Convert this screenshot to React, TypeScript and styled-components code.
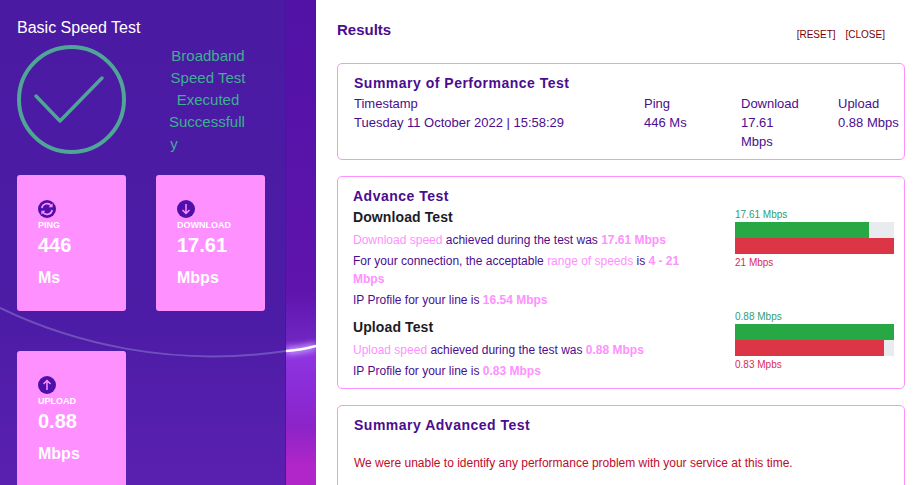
import React from 'react';
import styled, { createGlobalStyle } from 'styled-components';

const Global = createGlobalStyle`
    html, body {
        margin: 0;
        padding: 0;
        height: 485px;
        overflow: hidden;
        background: #fff;
    }
    * {
        box-sizing: border-box;
    }
    body {
        font-family: "Liberation Sans", Arial, sans-serif;
    }
`

const Page = styled.div`
    display: flex;
    width: 919px;
    height: 485px;
    overflow: hidden;
`

const Side = styled.aside`
    position: relative;
    flex: 0 0 316px;
    height: 485px;
    overflow: hidden;
    background: linear-gradient(180deg, #5212a6 0%, #5e14ad 60%, #6f25c0 70%, #9036e0 72.5%, #8a2cd8 80%, #8c24c8 88%, #b026c8 96%);
`

const Wave = styled.svg`
    position: absolute;
    left: 0;
    top: 0;
`

const Panel = styled.div`
    position: relative;
    width: 286px;
    height: 485px;
    padding: 18px 0 0 17px;
    background: linear-gradient(180deg, #4a1aa3 0%, #4c1ca6 65%, #5a20b0 100%);
    border-right: 1px solid #4c139c;
`

const SideTitle = styled.h1`
    position: relative;
    margin: 0;
    font-size: 16px;
    line-height: 19px;
    font-weight: 400;
    color: #fff;
`

const Status = styled.div`
    position: relative;
    display: flex;
    margin-top: 8px;
    height: 130px;
`

const StatusText = styled.div`
    width: 78px;
    margin-left: 43px;
    font-size: 15px;
    line-height: 22px;
    text-align: center;
    white-space: nowrap;
    color: #3fae92;
`

const StatusLine = styled.div<{ $shift?: number }>`
    padding-right: ${(p) => p.$shift || 0}px;
`

const Cards = styled.div`
    position: relative;
    display: grid;
    grid-template-columns: 109px 109px;
    grid-auto-rows: 136px;
    gap: 40px 30px;
`

const Card = styled.div`
    padding: 25px 0 0 21px;
    background: #ff90ff;
    border-radius: 3px;
    color: #fff;
    font-weight: 700;
`

const CardIcon = styled.svg`
    display: block;
`

const CardLabel = styled.div`
    margin-top: 2px;
    font-size: 9px;
    line-height: 11px;
`

const CardValue = styled.div`
    margin-top: -1px;
    font-size: 20px;
    line-height: 31px;
`

const CardUnit = styled.div`
    margin-top: 1px;
    font-size: 16px;
    line-height: 31px;
`

const Content = styled.main`
    flex: 1;
    padding: 0 14px 0 21px;
`

const TopBar = styled.div`
    display: flex;
    justify-content: space-between;
    height: 63px;
`

const Heading = styled.h2`
    margin: 22px 0 0;
    font-size: 15px;
    line-height: 16px;
    font-weight: 700;
    color: #4b0d8f;
`

const Links = styled.div`
    display: flex;
    gap: 10px;
    margin: 29px 20px 0 0;
    font-size: 10px;
    line-height: 12px;
    color: #7a0000;
`

const Box = styled.section<{ $pad: string }>`
    border: 1px solid #ff90ff;
    border-radius: 5px;
    margin-bottom: 16px;
    padding: ${(p) => p.$pad};
`

const BoxTitle = styled.h3`
    margin: 0;
    font-size: 14px;
    line-height: 17px;
    letter-spacing: 0.5px;
    font-weight: 700;
    color: #4b0d8f;
`

const SummaryGrid = styled.div`
    display: grid;
    grid-template-columns: 290px 97px 97px 1fr;
    font-size: 13px;
    line-height: 19px;
    color: #4b0d8f;
    margin-top: 2px;
`

const Advance = styled.div`
    display: flex;
    justify-content: space-between;
`

const AdvanceLeft = styled.div`
    width: 350px;
`

const SubTitle = styled.h4<{ $top: number }>`
    margin: ${(p) => p.$top}px 0 5px;
    font-size: 14px;
    line-height: 17px;
    letter-spacing: 0.1px;
    font-weight: 700;
    color: #1c1c28;
`

const Line = styled.p`
    margin: 3px 0 0;
    font-size: 12px;
    line-height: 18px;
    color: #4b0d8f;
`

const Pink = styled.span`
    color: #ff90ff;
`

const PinkBold = styled.strong`
    color: #ff90ff;
    font-weight: 700;
`

const Charts = styled.div`
    width: 159px;
    margin: 18px 10px 0 0;
`

const Chart = styled.div`
    height: 64px;
    margin-bottom: 38px;

    &:last-child {
        margin-bottom: 0;
    }
`

const ChartLabel = styled.div<{ $color: string }>`
    font-size: 10px;
    line-height: 18px;
    height: 16px;
    color: ${(p) => p.$color};
`

const Track = styled.div`
    height: 16px;
    background: #e9ecef;
`

const Fill = styled.div<{ $color: string }>`
    height: 100%;
    background: ${(p) => p.$color};
`

const Message = styled.p`
    margin: 21px 0 0;
    font-size: 12px;
    line-height: 16px;
    color: #c00a2a;
`

function PingIcon() {
    return (
        <CardIcon width="18" height="18" viewBox="0 0 18 18" fill="none">
            <circle cx="9" cy="9" r="9" fill="#4f0fa8" />
            <path d="M3.8 8a5.3 5.3 0 0 1 9.4-2.3" stroke="#ff90ff" strokeWidth="1.6" />
            <path d="M14.2 10a5.3 5.3 0 0 1-9.4 2.3" stroke="#ff90ff" strokeWidth="1.6" />
            <path d="M14.6 3.2v4h-4z" fill="#ff90ff" />
            <path d="M3.4 14.8v-4h4z" fill="#ff90ff" />
        </CardIcon>
    )
}

function ArrowIcon({ up }: { up?: boolean }) {
    return (
        <CardIcon width="18" height="18" viewBox="0 0 18 18" fill="none">
            <circle cx="9" cy="9" r="9" fill="#4f0fa8" />
            <path
                d={up ? 'M9 14V4.5M5.5 8 9 4.5 12.5 8' : 'M9 4v9.5M5.5 10 9 13.5 12.5 10'}
                stroke="#ff90ff"
                strokeWidth="1.5"
            />
        </CardIcon>
    )
}

const statCards = [
    { label: 'PING', value: '446', unit: 'Ms', icon: <PingIcon /> },
    { label: 'DOWNLOAD', value: '17.61', unit: 'Mbps', icon: <ArrowIcon /> },
    { label: 'UPLOAD', value: '0.88', unit: 'Mbps', icon: <ArrowIcon up /> },
]

const charts = [
    { top: '17.61 Mbps', bottom: '21 Mbps', green: 84.3, red: 100 },
    { top: '0.88 Mbps', bottom: '0.83 Mpbs', green: 100, red: 93.7 },
]

export default function App() {
    return (
        <Page>
            <Global />
            <Side>
                <Wave width="316" height="485" viewBox="0 0 316 485" fill="none">
                    <defs>
                        <filter id="glow" x="-20%" y="-200%" width="140%" height="500%">
                            <feGaussianBlur stdDeviation="3" />
                        </filter>
                    </defs>
                    <path d="M286 351 Q302 350 316 346" stroke="#c9a0ff" strokeWidth="6" filter="url(#glow)" />
                    <path d="M286 351 Q302 350 316 346" stroke="#fff" strokeWidth="2.6" />
                </Wave>
                <Panel>
                    <Wave width="286" height="485" viewBox="0 0 286 485" fill="none">
                        <path d="M0 308 C70 342 170 368 286 351" stroke="#6f50bd" strokeWidth="2" />
                    </Wave>
                    <SideTitle>Basic Speed Test</SideTitle>
                    <Status>
                        <svg width="109" height="109" viewBox="0 0 109 109" fill="none">
                            <circle cx="54.5" cy="54.5" r="52.5" stroke="#4fa596" strokeWidth="4" />
                            <path d="M19 51 L43 76 L85 33" stroke="#4fa596" strokeWidth="3.5" strokeLinecap="round" strokeLinejoin="round" />
                        </svg>
                        <StatusText>
                            <StatusLine>Broadband</StatusLine>
                            <StatusLine>Speed Test</StatusLine>
                            <StatusLine>Executed</StatusLine>
                            <StatusLine $shift={6}>Successfull</StatusLine>
                            <StatusLine $shift={68}>y</StatusLine>
                        </StatusText>
                    </Status>
                    <Cards>
                        {statCards.map((c) => (
                            <Card key={c.label}>
                                {c.icon}
                                <CardLabel>{c.label}</CardLabel>
                                <CardValue>{c.value}</CardValue>
                                <CardUnit>{c.unit}</CardUnit>
                            </Card>
                        ))}
                    </Cards>
                </Panel>
            </Side>
            <Content>
                <TopBar>
                    <Heading>Results</Heading>
                    <Links>
                        <span>[RESET]</span>
                        <span>[CLOSE]</span>
                    </Links>
                </TopBar>
                <Box $pad="11px 0 8px 16px">
                    <BoxTitle>Summary of Performance Test</BoxTitle>
                    <SummaryGrid>
                        <div>Timestamp<br />Tuesday 11 October 2022 | 15:58:29</div>
                        <div>Ping<br />446 Ms</div>
                        <div>Download<br />17.61<br />Mbps</div>
                        <div>Upload<br />0.88 Mbps</div>
                    </SummaryGrid>
                </Box>
                <Box $pad="11px 0 8px 15px">
                    <Advance>
                        <AdvanceLeft>
                            <BoxTitle>Advance Test</BoxTitle>
                            <SubTitle $top={4}>Download Test</SubTitle>
                            <Line><Pink>Download speed</Pink> achieved during the test was <PinkBold>17.61 Mbps</PinkBold></Line>
                            <Line>For your connection, the acceptable <Pink>range of speeds</Pink> is <PinkBold>4 - 21 Mbps</PinkBold></Line>
                            <Line>IP Profile for your line is <PinkBold>16.54 Mbps</PinkBold></Line>
                            <SubTitle $top={10}>Upload Test</SubTitle>
                            <Line><Pink>Upload speed</Pink> achieved during the test was <PinkBold>0.88 Mbps</PinkBold></Line>
                            <Line>IP Profile for your line is <PinkBold>0.83 Mbps</PinkBold></Line>
                        </AdvanceLeft>
                        <Charts>
                            {charts.map((c) => (
                                <Chart key={c.top}>
                                    <ChartLabel $color="#2f9d78">{c.top}</ChartLabel>
                                    <Track><Fill $color="#28a745" style={{ width: `${c.green}%` }} /></Track>
                                    <Track><Fill $color="#dc3545" style={{ width: `${c.red}%` }} /></Track>
                                    <ChartLabel $color="#dc2a55">{c.bottom}</ChartLabel>
                                </Chart>
                            ))}
                        </Charts>
                    </Advance>
                </Box>
                <Box $pad="11px 0 60px 16px">
                    <BoxTitle>Summary Advanced Test</BoxTitle>
                    <Message>We were unable to identify any performance problem with your service at this time.</Message>
                </Box>
            </Content>
        </Page>
    )
}
